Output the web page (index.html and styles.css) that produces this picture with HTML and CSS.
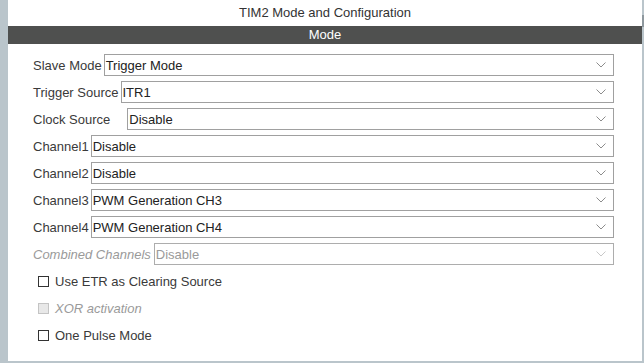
FILE: index.html
```html
<!DOCTYPE html>
<html lang="en">

<head>
    <meta charset="UTF-8">
    <meta name="viewport" content="width=device-width, initial-scale=1.0">
    <title>TIM2 Mode and Configuration</title>
    <link rel="stylesheet" href="styles.css">
</head>

<body>
    <div class="window">
        <div class="side"></div>
        <div class="main">
            <div class="title">TIM2 Mode and Configuration</div>
            <div class="section">Mode</div>
            <div class="form">
                <div class="row">
                    <span class="label">Slave Mode</span>
                    <div class="select"><span>Trigger Mode</span><svg width="10" height="6" viewBox="0 0 10 6"><polyline points="0.5,0.5 5,5 9.5,0.5" /></svg></div>
                </div>
                <div class="row">
                    <span class="label">Trigger Source</span>
                    <div class="select"><span>ITR1</span><svg width="10" height="6" viewBox="0 0 10 6"><polyline points="0.5,0.5 5,5 9.5,0.5" /></svg></div>
                </div>
                <div class="row">
                    <span class="label label-wide">Clock Source</span>
                    <div class="select"><span>Disable</span><svg width="10" height="6" viewBox="0 0 10 6"><polyline points="0.5,0.5 5,5 9.5,0.5" /></svg></div>
                </div>
                <div class="row">
                    <span class="label">Channel1</span>
                    <div class="select"><span>Disable</span><svg width="10" height="6" viewBox="0 0 10 6"><polyline points="0.5,0.5 5,5 9.5,0.5" /></svg></div>
                </div>
                <div class="row">
                    <span class="label">Channel2</span>
                    <div class="select"><span>Disable</span><svg width="10" height="6" viewBox="0 0 10 6"><polyline points="0.5,0.5 5,5 9.5,0.5" /></svg></div>
                </div>
                <div class="row">
                    <span class="label">Channel3</span>
                    <div class="select"><span>PWM Generation CH3</span><svg width="10" height="6" viewBox="0 0 10 6"><polyline points="0.5,0.5 5,5 9.5,0.5" /></svg></div>
                </div>
                <div class="row">
                    <span class="label">Channel4</span>
                    <div class="select"><span>PWM Generation CH4</span><svg width="10" height="6" viewBox="0 0 10 6"><polyline points="0.5,0.5 5,5 9.5,0.5" /></svg></div>
                </div>
                <div class="row disabled">
                    <span class="label">Combined Channels</span>
                    <div class="select"><span>Disable</span><svg width="10" height="6" viewBox="0 0 10 6"><polyline points="0.5,0.5 5,5 9.5,0.5" /></svg></div>
                </div>
                <div class="row check">
                    <span class="box"></span>
                    <span class="label">Use ETR as Clearing Source</span>
                </div>
                <div class="row check disabled">
                    <span class="box"></span>
                    <span class="label">XOR activation</span>
                </div>
                <div class="row check">
                    <span class="box"></span>
                    <span class="label">One Pulse Mode</span>
                </div>
            </div>
        </div>
        <div class="scroll">
            <div class="thumb"></div>
        </div>
    </div>
</body>

</html>
```

FILE: styles.css
```css
* {
    font-family: "Liberation Sans", Arial, Helvetica, sans-serif;
    box-sizing: border-box;
}

body {
    margin: 0;
    background-color: #FFFFFF;
}

.window {
    display: flex;
    width: 644px;
    height: 363px;
    border-bottom: 2px solid #BAC5CB;
}

.side {
    width: 8px;
    background-color: #BAC5CB;
}

.main {
    flex: 1;
    display: flex;
    flex-direction: column;
}

.scroll {
    width: 2px;
    background-color: #BAC5CB;
    padding-top: 15px;
}

.thumb {
    height: 12px;
    background-color: #8E989E;
}

.title {
    height: 26px;
    line-height: 26px;
    text-align: center;
    font-size: 13px;
    color: #333333;
}

.section {
    height: 18px;
    line-height: 18px;
    text-align: center;
    font-size: 13px;
    color: #FFFFFF;
    background-color: #4F504F;
}

.form {
    display: flex;
    flex-direction: column;
    gap: 5px;
    padding: 10px 28px 0 25px;
}

.row {
    display: flex;
    align-items: center;
    gap: 2px;
    height: 22px;
}

.label {
    font-size: 13px;
    color: #3A3A3A;
    white-space: nowrap;
}

.label-wide {
    padding-right: 15px;
}

.select {
    flex: 1;
    height: 22px;
    display: flex;
    align-items: center;
    justify-content: space-between;
    padding: 0 7px 0 1px;
    border: 1px solid #A0A0A0;
    font-size: 13px;
    color: #222222;
}

.select svg {
    fill: none;
    stroke: #8C8C8C;
    stroke-width: 1;
}

.disabled {
    gap: 3px;
}

.disabled .label {
    font-style: italic;
    color: #9A9A9A;
}

.disabled .select {
    border-color: #ADADAD;
    color: #9A9A9A;
}

.disabled .select svg {
    stroke: #C8C8C8;
}

.check {
    gap: 6px;
    padding-left: 5px;
}

.box {
    width: 11px;
    height: 11px;
    border: 1px solid #333333;
    background-color: #FFFFFF;
}

.disabled .box {
    border-color: #C4C4C4;
    background-color: #E8E8E8;
}
```
